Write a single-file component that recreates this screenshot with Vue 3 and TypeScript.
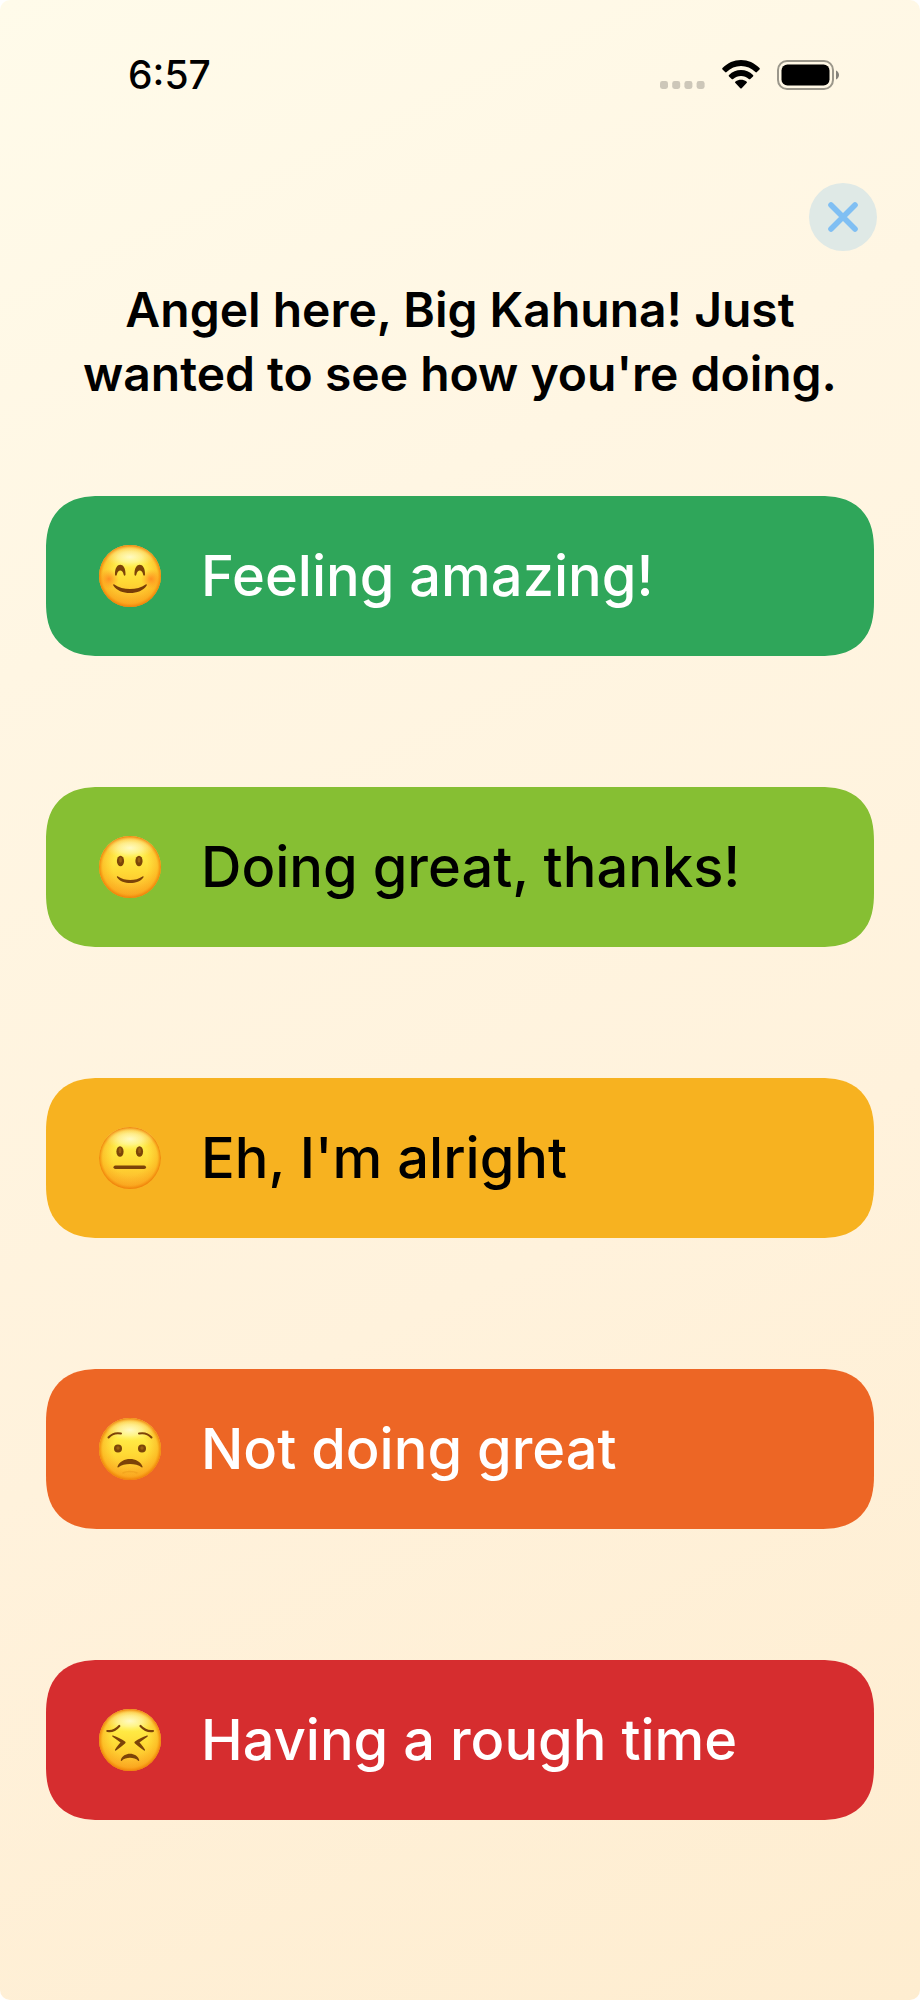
<script setup lang="ts">
type Mood = 'amazing' | 'great' | 'alright' | 'low' | 'rough'

interface MoodOption {
  id: Mood
  label: string
}

const time = '6:57'

const options: MoodOption[] = [
  { id: 'amazing', label: 'Feeling amazing!' },
  { id: 'great', label: 'Doing great, thanks!' },
  { id: 'alright', label: "Eh, I'm alright" },
  { id: 'low', label: 'Not doing great' },
  { id: 'rough', label: 'Having a rough time' },
]
</script>

<template>
  <div class="screen">
    <header class="status">
      <span class="time">{{ time }}</span>
      <div class="indicators">
        <svg class="signal" width="45" height="8" viewBox="0 0 45 8" aria-hidden="true">
          <rect v-for="n in 4" :key="n" :x="(n - 1) * 12.2" y="0" width="8" height="8" rx="2.4" fill="#cdc7b9" />
        </svg>
        <svg class="wifi" width="38" height="29" viewBox="0 0 38 29" aria-hidden="true">
          <path d="M.5 8.100C5.500 2.900 12 0 19 0s13.500 2.900 18.500 8.100c.5.500.500 1 0 1.500l-2.600 2.500c-.5.500-1 .5-1.500 0C29.500 8.200 24.500 6.100 19 6.100S8.500 8.200 4.600 12.100c-.5.500-1 .5-1.500 0L.5 9.600c-.5-.5-.5-1 0-1.500Z" />
          <path d="M7 14.900C10.300 11.700 14.500 10 19 10s8.700 1.700 12 4.900c.5.500.500 1 0 1.500l-2.700 2.600c-.4.500-1 .4-1.500 0-2.200-2-4.900-3-7.800-3s-5.600 1-7.800 3c-.5.400-1.100.5-1.500 0L7 16.400c-.5-.5-.5-1 0-1.500Z" />
          <path d="M13.500 21.600c3.200-2.500 7.800-2.500 11 0 .6.500.600 1 .1 1.500l-4.900 5.100c-.5.500-.9.500-1.400 0l-4.900-5.100c-.5-.5-.5-1 .1-1.500Z" />
        </svg>
        <svg class="battery" width="63" height="30" viewBox="0 0 63 30" aria-hidden="true">
          <rect x="1" y="1" width="55" height="28" rx="9" fill="none" stroke="#9b978b" stroke-width="2" />
          <rect x="4.500" y="4.500" width="48" height="21" rx="6" />
          <path d="M59 10.500c4 1.800 4 7.200 0 9Z" fill="#85827a" />
        </svg>
      </div>
    </header>

    <main class="content">
      <button class="close" type="button" aria-label="Close">
        <svg width="30" height="30" viewBox="0 0 30 30" aria-hidden="true">
          <path d="M3 3 27 27M27 3 3 27" fill="none" stroke="#80bff3" stroke-width="5.600" stroke-linecap="round" />
        </svg>
      </button>

      <h1 class="title">Angel here, Big Kahuna! Just wanted to see how you're doing.</h1>

      <div class="options">
        <button v-for="option in options" :key="option.id" type="button" class="option" :class="option.id">
          <svg class="face" width="62" height="62" viewBox="0 0 62 62" aria-hidden="true">
            <defs>
              <linearGradient :id="`skin-${option.id}`" x1="0" y1="0" x2="0" y2="1">
                <stop offset="0" stop-color="#fff27c" />
                <stop offset=".3" stop-color="#ffee48" />
                <stop offset=".6" stop-color="#ffd834" />
                <stop offset="1" stop-color="#fcae2a" />
              </linearGradient>
              <radialGradient :id="`rim-${option.id}`" cx=".5" cy=".5" r=".5">
                <stop offset=".55" stop-color="#f9a01a" stop-opacity="0" />
                <stop offset=".88" stop-color="#f8960f" stop-opacity=".4" />
                <stop offset="1" stop-color="#ee7c06" stop-opacity=".95" />
              </radialGradient>
              <radialGradient :id="`shine-${option.id}`">
                <stop offset="0" stop-color="#fffbd0" stop-opacity=".9" />
                <stop offset=".5" stop-color="#fff9b0" stop-opacity=".6" />
                <stop offset="1" stop-color="#fff37a" stop-opacity="0" />
              </radialGradient>
              <radialGradient :id="`blush-${option.id}`">
                <stop offset="0" stop-color="#ff7a1c" stop-opacity=".75" />
                <stop offset="1" stop-color="#ff8a1c" stop-opacity="0" />
              </radialGradient>
            </defs>
            <circle cx="31" cy="31" r="31" :fill="`url(#skin-${option.id})`" />
            <circle cx="31" cy="31" r="31" :fill="`url(#rim-${option.id})`" />
            <ellipse cx="31" cy="12" rx="24" ry="11" :fill="`url(#shine-${option.id})`" />

            <g v-if="option.id === 'amazing'">
              <circle cx="10" cy="34" r="10" :fill="`url(#blush-${option.id})`" />
              <circle cx="52" cy="34" r="10" :fill="`url(#blush-${option.id})`" />
              <path d="M16 29.500C15.500 16.500 27 16.500 26.500 29.500c0 1.500-1.500 1.500-1.800.2-1.200-5.600-5.600-5.600-6.900 0-.3 1.300-1.800 1.300-1.800-.2ZM35.500 29.500C35 16.500 46.500 16.500 46 29.500c0 1.500-1.500 1.500-1.800.2-1.200-5.600-5.600-5.600-6.900 0-.3 1.300-1.800 1.300-1.800-.2Z" fill="#7c4308" />
              <path d="M15.300 39.500c8.500 6 22.900 6 31.400 0 .6-.5 1.400.1 1 1-5.900 10-27.500 10-33.400 0-.4-.9.400-1.500 1-1Z" fill="#783d08" />
            </g>

            <g v-else-if="option.id === 'great'">
              <ellipse cx="21.500" cy="25" rx="3.600" ry="5.300" fill="#7c4508" />
              <ellipse cx="40" cy="25" rx="3.600" ry="5.300" fill="#7c4508" />
              <ellipse cx="21.500" cy="24" rx="1.400" ry="2.800" fill="#9b6010" />
              <ellipse cx="40" cy="24" rx="1.400" ry="2.800" fill="#9b6010" />
              <path d="M19 40.500c7 4.800 17.500 4.800 24.500 0 .8-.5 1.400.2.900 1-5 7.400-21.300 7.400-26.300 0-.5-.8.100-1.500.9-1Z" fill="#7c4308" />
            </g>

            <g v-else-if="option.id === 'alright'">
              <ellipse cx="21" cy="24.500" rx="3.600" ry="5.300" fill="#7c4508" />
              <ellipse cx="40.500" cy="24.500" rx="3.600" ry="5.300" fill="#7c4508" />
              <ellipse cx="21" cy="23.500" rx="1.400" ry="2.800" fill="#9b6010" />
              <ellipse cx="40.500" cy="23.500" rx="1.400" ry="2.800" fill="#9b6010" />
              <rect x="14.500" y="38.500" width="32.500" height="3.600" rx="1.800" fill="#7c4308" />
            </g>

            <g v-else-if="option.id === 'low'">
              <path d="M9.500 19.500c3-3.500 7.500-5 12.500-4M52.500 19.500c-3-3.500-7.500-5-12.500-4" fill="none" stroke="#7c4308" stroke-width="2" stroke-linecap="round" />
              <circle cx="19" cy="30.500" r="4" fill="#7c4508" />
              <circle cx="43" cy="30.500" r="4" fill="#7c4508" />
              <circle cx="19" cy="30" r="1.700" fill="#9b6010" />
              <circle cx="43" cy="30" r="1.700" fill="#9b6010" />
              <path d="M18.500 48.500c3.600-10 21.400-10 25 0 .3.900-.3 1.300-1 .7-5.500-4.400-17.500-4.400-23 0-.7.600-1.300.2-1-.7Z" fill="#7c4308" />
              <path d="M24 55c3.500-2 10.500-2 14 0" fill="none" stroke="#f0a01c" stroke-width="1.500" stroke-linecap="round" opacity=".7" />
            </g>

            <g v-else>
              <path d="M8.300 22c4 .6 8.700-1.200 12-5M54 22c-4 .6-9-1.200-12.500-5" fill="none" stroke="#7c4308" stroke-width="2.200" stroke-linecap="round" />
              <path d="M14 26.500c4.500 1.500 8.800 3.500 12 6 .8.700.800 1.400 0 2-2.600 2.200-5.700 4.500-9 7-.8.600-1.400-.1-.9-.9 1.700-2.800 3.500-5 5.400-7-2.300-2-5-4-7.900-5.900-.8-.6-.4-1.500.4-1.200ZM48 26.500c-4.500 1.500-8.800 3.500-12 6-.8.700-.8 1.400 0 2 2.600 2.200 5.700 4.500 9 7 .8.600 1.400-.1.900-.9-1.700-2.800-3.500-5-5.400-7 2.300-2 5-4 7.900-5.900.8-.6.400-1.500-.4-1.200Z" fill="#7c4308" />
              <path d="M21.800 51c2.400-8.300 16-8.300 18.400 0 .2.900-.4 1.300-1 .7-4-3.800-12.400-3.800-16.400 0-.6.600-1.200.2-1-.7Z" fill="#7c4308" />
            </g>
          </svg>
          <span class="label">{{ option.label }}</span>
        </button>
      </div>
    </main>
  </div>
</template>

<style>
body {
  margin: 0;
  background: #fff;
}
</style>

<style scoped>
.screen {
  box-sizing: border-box;
  min-height: 100vh;
  padding: 48px 46px 0;
  border-radius: 10px;
  background: linear-gradient(155deg, #fffbea 0%, #fff6e3 28%, #fff2dc 62%, #feedd0 100%);
  color: #000;
  font-family: Inter, "Liberation Sans", sans-serif;
}

.status {
  display: flex;
  align-items: center;
  justify-content: space-between;
  height: 54px;
  padding: 0 34px 0 82px;
}

.time {
  font-size: 39px;
  font-weight: 500;
  line-height: 54px;
}

.indicators {
  display: flex;
  align-items: flex-end;
  gap: 17px;
}

.signal {
  margin-bottom: 1px;
}

.wifi {
  margin-bottom: 1px;
}

.content {
  display: flex;
  flex-direction: column;
  padding-top: 81px;
}

.close {
  display: grid;
  place-items: center;
  align-self: flex-end;
  width: 68px;
  height: 68px;
  margin-right: -3px;
  padding: 0;
  border: 0;
  border-radius: 50%;
  background: #dfe9e6;
  cursor: pointer;
}

.title {
  margin: 27px 0 0;
  padding: 0 24px;
  font-size: 48px;
  font-weight: 620;
  line-height: 64px;
  text-align: center;
}

.options {
  display: flex;
  flex-direction: column;
  gap: 131px;
  margin-top: 90px;
  padding-bottom: 48px;
}

.option {
  display: flex;
  align-items: center;
  gap: 40px;
  width: 100%;
  min-height: 160px;
  padding: 0 53px;
  border: 0;
  border-radius: 54px;
  corner-shape: superellipse(1.3);
  color: #fff;
  font-family: inherit;
  font-size: 56px;
  font-weight: 540;
  line-height: 72px;
  text-align: left;
  cursor: pointer;
}

.face {
  flex: none;
}

.amazing {
  background: #2fa65a;
}

.great {
  background: #86bf33;
  color: #000;
}

.alright {
  background: #f7b220;
  color: #000;
}

.low {
  background: #ed6625;
}

.rough {
  background: #d62d2f;
}
</style>
